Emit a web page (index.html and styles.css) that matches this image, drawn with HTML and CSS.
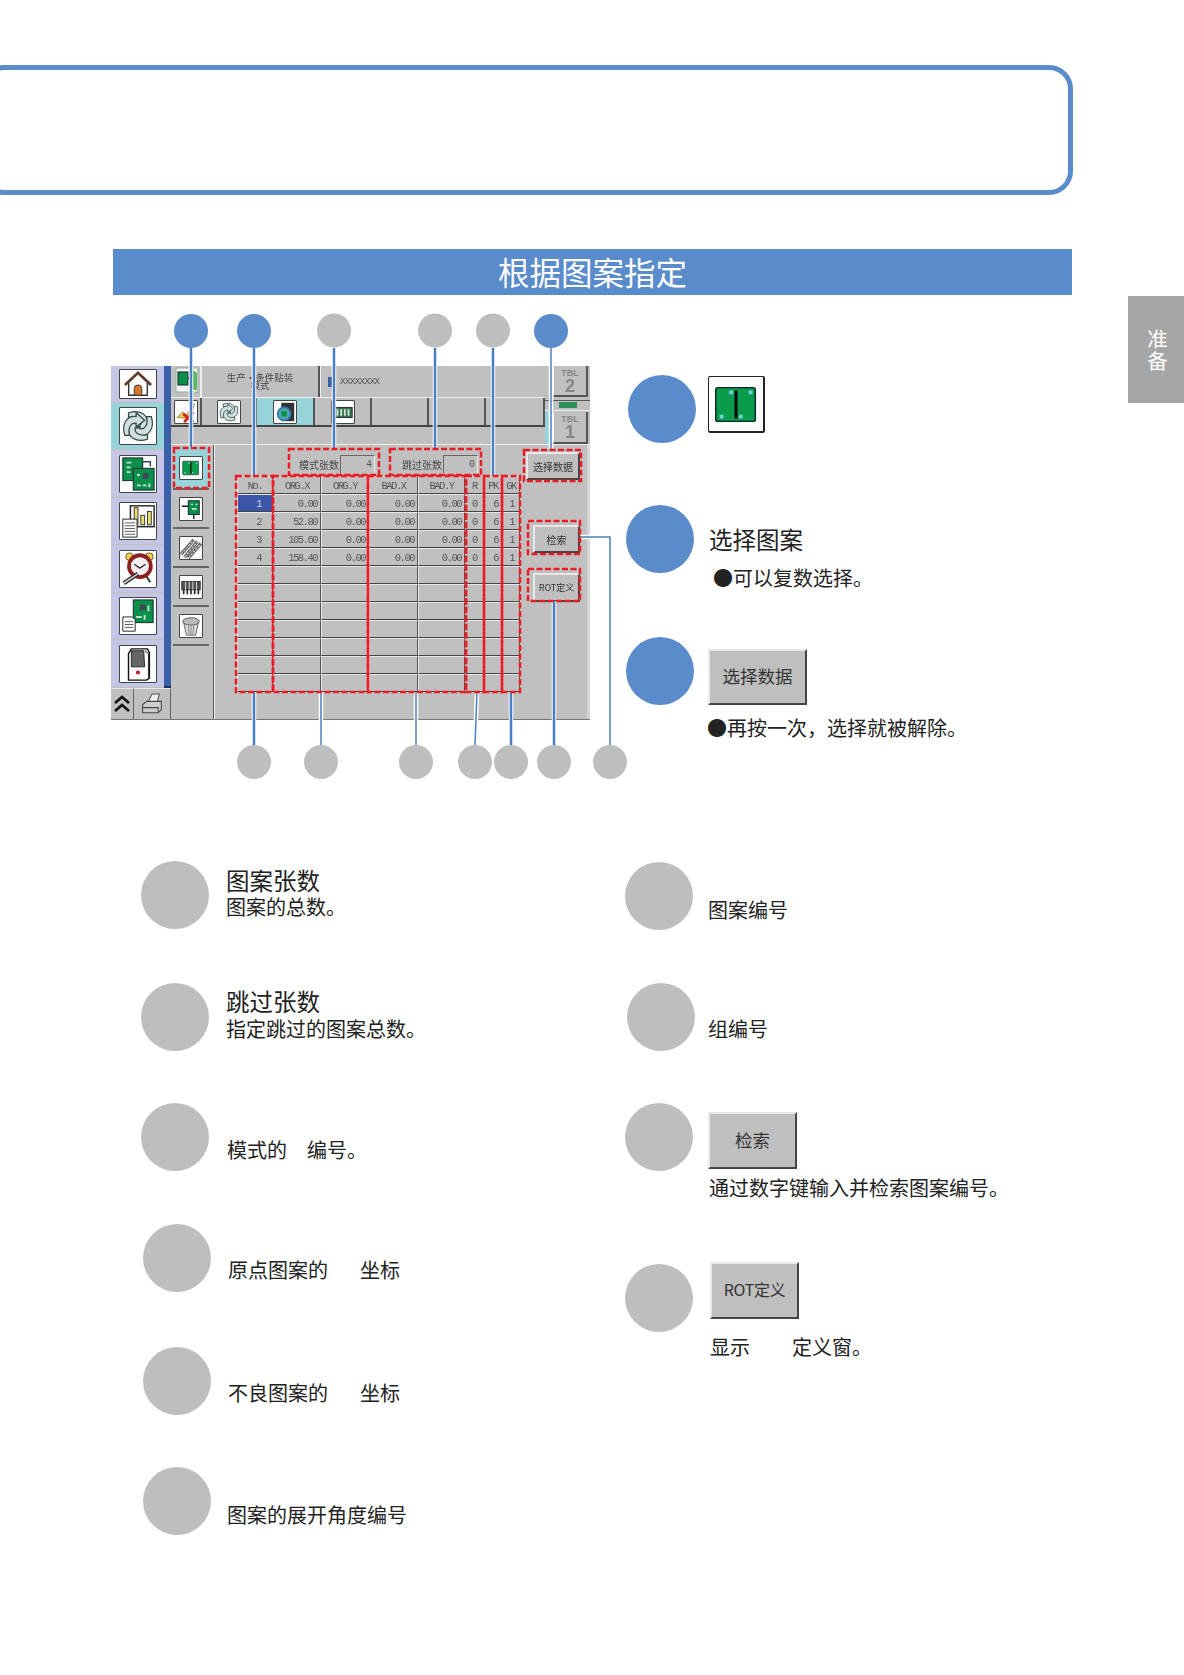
FILE: index.html
```html
<!DOCTYPE html>
<html lang="zh-CN">
<head>
    <meta charset="UTF-8">
    <meta name="viewport" content="width=device-width, initial-scale=1.0">
    <title>根据图案指定</title>
    <link rel="stylesheet" href="styles.css">
</head>
<body>
    <svg class="defs" width="0" height="0">
        <symbol id="i-home" viewBox="0 0 38 30">
            <path d="M9 14V27H29V14" fill="#fff" stroke="#333" stroke-width="1.5"/>
            <path d="M5 16L19 3L33 16" fill="none" stroke="#5c3b2c" stroke-width="3"/>
            <path d="M15 27V20a4 4 0 0 1 8 0v7z" fill="#d9772b" stroke="#333"/>
        </symbol>
        <symbol id="i-cycle" viewBox="0 0 38 38">
            <g id="swirl"><path d="M9 5C22 1 30 8 29 17L33 17L25 26L18 17L22 17C23 12 18 8 9 10Z" fill="#d3dfdf" stroke="#2d4a4a" stroke-width="1.3"/></g>
            <use href="#swirl" transform="rotate(90 19 19)"/>
            <use href="#swirl" transform="rotate(180 19 19)"/>
            <use href="#swirl" transform="rotate(270 19 19)"/>
        </symbol>
        <symbol id="i-pcbs" viewBox="0 0 38 38">
            <rect x="3" y="2" width="21" height="24" fill="#0d8f4c" stroke="#123"/>
            <path d="M24 6h8v5" fill="none" stroke="#345" stroke-width="1.5"/>
            <rect x="14" y="13" width="22" height="23" fill="#0d8f4c" stroke="#123"/>
            <rect x="24" y="18" width="6" height="6" fill="#445"/>
            <path d="M7 7h5M7 12h4M7 17h4M18 31h4M24 31h4M31 29v4M18 20h3" stroke="#bfe6cf" stroke-width="2"/>
        </symbol>
        <symbol id="i-chart" viewBox="0 0 38 38">
            <rect x="11" y="3" width="25" height="22" fill="#fff" stroke="#222" stroke-width="1.5"/>
            <rect x="15" y="5" width="4" height="18" fill="#e8e070" stroke="#333"/>
            <rect x="22" y="13" width="4" height="10" fill="#e8e070" stroke="#333"/>
            <rect x="29" y="9" width="4" height="14" fill="#e8e070" stroke="#333"/>
            <rect x="3" y="17" width="15" height="19" fill="#fff" stroke="#222"/>
            <path d="M5 21h11M5 24h11M5 27h11M5 30h11M5 33h11" stroke="#555"/>
        </symbol>
        <symbol id="i-alarm" viewBox="0 0 38 38">
            <circle cx="10" cy="6" r="4" fill="#ecd44a" stroke="#654"/>
            <circle cx="31" cy="6" r="4" fill="#ecd44a" stroke="#654"/>
            <circle cx="21" cy="16" r="11.5" fill="#f5eeee" stroke="#8c2020" stroke-width="4"/>
            <path d="M15 14l6 4l6-4" fill="none" stroke="#333" stroke-width="1.5"/>
            <path d="M28 27l4 6" stroke="#333" stroke-width="2"/>
            <path d="M4 34l15-10" stroke="#333" stroke-width="4.5"/>
            <path d="M4 34l15-10" stroke="#ddd" stroke-width="1.5"/>
        </symbol>
        <symbol id="i-boardoc" viewBox="0 0 38 38">
            <rect x="14" y="2" width="21" height="24" fill="#0d8f4c" stroke="#123"/>
            <rect x="21" y="7" width="6" height="6" fill="#445"/>
            <path d="M17 20h6M26 18v5M30 8v6" stroke="#bfe6cf" stroke-width="2"/>
            <path d="M3 20h10l3 3v12H3z" fill="#fff" stroke="#222"/>
            <path d="M5 25h9M5 28h9M5 31h9" stroke="#555"/>
        </symbol>
        <symbol id="i-machine" viewBox="0 0 38 38">
            <path d="M9 8L12 3H29L31 7V34L28 36H9Z" fill="#fff" stroke="#111" stroke-width="1.5"/>
            <path d="M12 5H25L26 22H12Z" fill="#666" stroke="#222"/>
            <path d="M26 5L30 8V33" fill="none" stroke="#222"/>
            <circle cx="19" cy="28" r="2.2" fill="#b22"/>
        </symbol>
        <symbol id="i-split" viewBox="0 0 57 57">
            <rect x="7" y="11" width="41" height="35" rx="2" fill="#0a9b4b" stroke="#123" stroke-width="1.5"/>
            <rect x="26.5" y="14" width="3" height="29"/>
            <path d="M21 14h4v4h-4zM41 14h4v4h-4zM11 39h4v4h-4zM31 39h4v4h-4z" fill="#6fd0dc"/>
        </symbol>
        <symbol id="i-conn" viewBox="0 0 24 24">
            <rect x="9" y="3" width="12" height="15" fill="#0d8f4c" stroke="#123"/>
            <path d="M2 9h7M15 18v5" stroke="#123" stroke-width="1.5"/>
            <path d="M12 7h2M17 7h2M13 12h5" stroke="#cfe" stroke-width="1.5"/>
        </symbol>
        <symbol id="i-strips" viewBox="0 0 24 24">
            <path d="M1 19L15 3M5 22L19 5M9 23L23 7" stroke="#555" stroke-width="3.5"/>
            <path d="M1 19L15 3M5 22L19 5M9 23L23 7" stroke="#ccc" stroke-width="1.5" stroke-dasharray="3 1"/>
        </symbol>
        <symbol id="i-chips" viewBox="0 0 24 24">
            <rect x="2" y="6" width="20" height="9" fill="#555" stroke="#222"/>
            <path d="M6 6v9M10 6v9M14 6v9M18 6v9" stroke="#ddd"/>
            <path d="M4 15v5M8 15v5M12 15v5M16 15v5M20 15v5" stroke="#222" stroke-width="1.8"/>
        </symbol>
        <symbol id="i-bucket" viewBox="0 0 24 24">
            <path d="M4 8L7 22H17L20 8Z" fill="#ddd" stroke="#555"/>
            <ellipse cx="12" cy="7" rx="9" ry="4" fill="#bbb" stroke="#555"/>
            <path d="M9 12l1 9M15 12l-1 9M12 12v9" stroke="#777"/>
        </symbol>
    </svg>

    <div class="frame"></div>
    <h1 class="title">根据图案指定</h1>

    <div class="upper">
        <div class="diagram">
            <div class="screen">
                <div class="rail">
                    <div class="rail-top">
                        <div class="side">
                            <div class="side-cell cell-home"><span class="ico ico-home"><svg><use href="#i-home"/></svg></span></div>
                            <div class="side-cell cell-on"><span class="ico"><svg><use href="#i-cycle"/></svg></span></div>
                            <div class="side-cell"><span class="ico"><svg><use href="#i-pcbs"/></svg></span></div>
                            <div class="side-cell"><span class="ico"><svg><use href="#i-chart"/></svg></span></div>
                            <div class="side-cell"><span class="ico"><svg><use href="#i-alarm"/></svg></span></div>
                            <div class="side-cell"><span class="ico"><svg><use href="#i-boardoc"/></svg></span></div>
                            <div class="side-cell"><span class="ico"><svg><use href="#i-machine"/></svg></span></div>
                        </div>
                        <div class="strip"></div>
                    </div>
                    <div class="rail-bottom">
                        <div class="rail-btn rail-up">
                            <svg width="18" height="20" viewBox="0 0 18 20"><path d="M2 9L9 3L16 9M2 17L9 11L16 17" fill="none" stroke="#111" stroke-width="2.6"/></svg>
                        </div>
                        <div class="rail-btn rail-print">
                            <svg width="24" height="25" viewBox="0 0 22 24"><path d="M7 10L11 2H18L16 10Z" fill="#eee" stroke="#555"/><path d="M2 12L6 9H20V17L17 20H2Z" fill="#ccc" stroke="#444"/><path d="M2 15H17V20" fill="none" stroke="#444"/></svg>
                        </div>
                    </div>
                </div>

                <div class="main">
                    <div class="head">
                        <div class="head-left">
                            <div class="head-row1">
                                <div class="head-door">
                                    <svg width="24" height="26" viewBox="0 0 24 26"><rect x="1" y="1" width="22" height="24" fill="#eef4ee" stroke="#9a9"/><rect x="3" y="5" width="10" height="13" fill="#0d8f4c" stroke="#123"/><path d="M13 11h4" stroke="#123" stroke-width="2"/><path d="M18 3l4 3v17h-6V12z" fill="#5cb85c"/></svg>
                                </div>
                                <div class="head-name">生产·条件贴装<br>模式</div>
                                <div class="head-field"><i class="field-mark"></i>XXXXXXXX</div>
                            </div>
                            <div class="head-row2">
                                <div class="tab tab-first">
                                    <span class="ico ico-sm"><svg viewBox="0 0 24 24"><path d="M2 18L9 12L12 16L21 3L17 19Z" fill="#e8d050" stroke="#a83"/><path d="M9 14L20 23M20 12L10 23" stroke="#d2231e" stroke-width="3"/></svg></span>
                                </div>
                                <div class="tab tab-b"><span class="ico ico-sm"><svg><use href="#i-cycle"/></svg></span></div>
                                <div class="tab tab-c tab-on">
                                    <span class="ico ico-sm"><svg viewBox="0 0 24 24"><rect x="8" y="2" width="14" height="20" fill="#333"/><circle cx="11" cy="14" r="7" fill="#5aa" stroke="#2a7db5" stroke-width="2"/><rect x="8" y="11" width="6" height="6" fill="#0d8f4c"/></svg></span>
                                </div>
                                <div class="tab tab-d"><span class="ico ico-sm"><svg viewBox="0 0 24 24"><rect x="2" y="7" width="20" height="11" fill="#2c7a4c" stroke="#222"/><path d="M6 9v7M10 9v7M14 9v7M18 9v7" stroke="#ddd" stroke-width="2"/></svg></span></div>
                                <div class="tab tab-d"></div>
                                <div class="tab tab-d"></div>
                                <div class="tab tab-end"></div>
                            </div>
                        </div>
                        <div class="head-right">
                            <div class="tbl"><b>TBL</b><strong>2</strong></div>
                            <div class="tbl-led"><i></i></div>
                            <div class="tbl-low">
                                <i class="sliver"></i>
                                <div class="tbl"><b>TBL</b><strong>1</strong></div>
                            </div>
                        </div>
                    </div>

                    <div class="body">
                        <div class="tools">
                            <div class="tool tool-on"><span class="ico ico-sm"><svg><use href="#i-split"/></svg></span></div>
                            <div class="tool"><span class="ico ico-sm"><svg><use href="#i-conn"/></svg></span></div>
                            <div class="tool"><span class="ico ico-sm"><svg><use href="#i-strips"/></svg></span></div>
                            <div class="tool"><span class="ico ico-sm"><svg><use href="#i-chips"/></svg></span></div>
                            <div class="tool"><span class="ico ico-sm"><svg><use href="#i-bucket"/></svg></span></div>
                        </div>
                        <div class="panel">
                            <div class="panel-left">
                                <div class="counts">
                                    <div class="count count-a"><span>模式张数</span><em>4</em></div>
                                    <div class="count count-b"><span>跳过张数</span><em>0</em></div>
                                </div>
                                <table class="grid">
                                    <thead>
                                        <tr><th class="w-no">No.</th><th class="w-x">ORG.X</th><th class="w-y">ORG.Y</th><th class="w-bx">BAD.X</th><th class="w-by">BAD.Y</th><th class="w-r">R</th><th class="w-p">PK</th><th class="w-p">GK</th></tr>
                                    </thead>
                                    <tbody>
                                        <tr><td class="sel">1</td><td>0.00</td><td>0.00</td><td>0.00</td><td>0.00</td><td class="mid">0</td><td>6</td><td class="gk">1</td></tr>
                                        <tr><td class="no">2</td><td>52.80</td><td>0.00</td><td>0.00</td><td>0.00</td><td class="mid">0</td><td>6</td><td class="gk">1</td></tr>
                                        <tr><td class="no">3</td><td>105.60</td><td>0.00</td><td>0.00</td><td>0.00</td><td class="mid">0</td><td>6</td><td class="gk">1</td></tr>
                                        <tr><td class="no">4</td><td>158.40</td><td>0.00</td><td>0.00</td><td>0.00</td><td class="mid">0</td><td>6</td><td class="gk">1</td></tr>
                                        <tr><td></td><td></td><td></td><td></td><td></td><td></td><td></td><td></td></tr>
                                        <tr><td></td><td></td><td></td><td></td><td></td><td></td><td></td><td></td></tr>
                                        <tr><td></td><td></td><td></td><td></td><td></td><td></td><td></td><td></td></tr>
                                        <tr><td></td><td></td><td></td><td></td><td></td><td></td><td></td><td></td></tr>
                                        <tr><td></td><td></td><td></td><td></td><td></td><td></td><td></td><td></td></tr>
                                        <tr><td></td><td></td><td></td><td></td><td></td><td></td><td></td><td></td></tr>
                                        <tr><td></td><td></td><td></td><td></td><td></td><td></td><td></td><td></td></tr>
                                    </tbody>
                                </table>
                            </div>
                            <div class="panel-right">
                                <div class="btn btn-mini btn-select">选择数据</div>
                                <div class="btn btn-mini btn-find">检索</div>
                                <div class="btn btn-mini btn-rot">ROT定义</div>
                            </div>
                        </div>
                    </div>
                </div>
            </div>

            <!-- callouts, in page coordinates -->
            <svg class="overlay" viewBox="111 296 515 490" width="515" height="490">
                <g class="halo">
                    <path d="M191 348V447M254 348V475M334 348V449M435 348V449M493 348V475M551 348V449"/>
                    <path d="M254 692V745M321 692V745M416 692V745M477 692L475 745M511 692V745M554 601V745M580 537H610V745"/>
                </g>
                <g class="lead">
                    <path d="M191 348V447M254 348V475M334 348V449M435 348V449M493 348V475"/>
                    <path d="M254 692V745M511 692V745M554 601V745"/>
                </g>
                <g class="lead lead-thin">
                    <path d="M551 348V449M321 692V745M416 692V745M477 692L475 745M580 537H610V745"/>
                </g>
                <g class="marks">
                    <rect x="174" y="448" width="35" height="40"/>
                    <rect x="289" y="449" width="90" height="26"/>
                    <rect x="390" y="449" width="91" height="26"/>
                    <rect x="524" y="450" width="57" height="31"/>
                    <rect x="236" y="476" width="37" height="216"/>
                    <rect x="273" y="476" width="95" height="216"/>
                    <rect x="368" y="476" width="98" height="216"/>
                    <rect x="466" y="476" width="18" height="216"/>
                    <rect x="484" y="476" width="18" height="216"/>
                    <rect x="502" y="476" width="18" height="216"/>
                    <rect x="528" y="521" width="52" height="33"/>
                    <rect x="528" y="569" width="52" height="32"/>
                </g>
                <g class="dot-blue">
                    <circle cx="191" cy="331" r="17"/>
                    <circle cx="254" cy="331" r="17"/>
                    <circle cx="551" cy="331" r="17"/>
                </g>
                <g class="dot-grey">
                    <circle cx="334" cy="330.5" r="17"/>
                    <circle cx="435" cy="330.5" r="17"/>
                    <circle cx="493" cy="330.5" r="17"/>
                    <circle cx="254" cy="762" r="17"/>
                    <circle cx="321" cy="762" r="17"/>
                    <circle cx="416" cy="762" r="17"/>
                    <circle cx="475" cy="762" r="17"/>
                    <circle cx="511" cy="762" r="17"/>
                    <circle cx="554" cy="762" r="17"/>
                    <circle cx="610" cy="762" r="17"/>
                </g>
            </svg>
        </div>

        <div class="notes">
            <div class="note note-a">
                <i class="disc disc-blue"></i>
                <div class="big-icon"><svg width="55" height="55"><use href="#i-split"/></svg></div>
            </div>
            <div class="note note-b">
                <i class="disc disc-blue"></i>
                <div class="note-text">
                    <p class="head-text">选择图案</p>
                    <p class="line line-in">●可以复数选择。</p>
                </div>
            </div>
            <div class="note note-c">
                <i class="disc disc-blue"></i>
                <div class="note-text note-text-c">
                    <div class="btn btn-big btn-wide">选择数据</div>
                    <p class="line line-after">●再按一次，选择就被解除。</p>
                </div>
            </div>
        </div>

        <div class="thumb">准<br>备</div>
    </div>

    <div class="lists">
        <div class="list list-left">
            <div class="item">
                <i class="disc"></i>
                <div class="item-text"><p class="head-text">图案张数</p><p class="line">图案的总数。</p></div>
            </div>
            <div class="item">
                <i class="disc"></i>
                <div class="item-text"><p class="head-text">跳过张数</p><p class="line">指定跳过的图案总数。</p></div>
            </div>
            <div class="item">
                <i class="disc"></i>
                <div class="item-text single"><p class="line">模式的　编号。</p></div>
            </div>
            <div class="item item-in">
                <i class="disc"></i>
                <div class="item-text single"><p class="line">原点图案的<span class="blank"></span>坐标</p></div>
            </div>
            <div class="item item-in">
                <i class="disc"></i>
                <div class="item-text single"><p class="line">不良图案的<span class="blank"></span>坐标</p></div>
            </div>
            <div class="item item-in item-last">
                <i class="disc"></i>
                <div class="item-text single low"><p class="line">图案的展开角度编号</p></div>
            </div>
        </div>

        <div class="list list-right">
            <div class="item">
                <i class="disc"></i>
                <div class="item-text single low"><p class="line">图案编号</p></div>
            </div>
            <div class="item item-nudge">
                <i class="disc"></i>
                <div class="item-text single"><p class="line">组编号</p></div>
            </div>
            <div class="item">
                <i class="disc"></i>
                <div class="item-text item-btn">
                    <div class="btn btn-big btn-std">检索</div>
                    <p class="line line-find">通过数字键输入并检索图案编号。</p>
                </div>
            </div>
            <div class="item item-rot">
                <i class="disc"></i>
                <div class="item-text">
                    <div class="btn btn-big btn-std btn-rotbig">ROT定义</div>
                    <p class="line line-rot">显示<span class="blank-wide"></span>定义窗。</p>
                </div>
            </div>
        </div>
    </div>
</body>
</html>
```

FILE: styles.css
```css
body {
    margin: 0;
    height: 1675px;
    overflow: hidden;
    background-color: #fff;
    color: #222;
    font-family: "Noto Sans CJK SC", sans-serif;
}

p {
    margin: 0;
}

.defs {
    position: absolute;
}

/* page head */
.frame {
    box-sizing: border-box;
    width: 1093px;
    height: 130px;
    margin: 65px 0 0 -20px;
    border: 5px solid #5a8bca;
    border-radius: 24px;
}

.title {
    box-sizing: border-box;
    width: 959px;
    height: 46px;
    margin: 54px 0 0 113px;
    background-color: #5a8bca;
    color: #fff;
    font-size: 31.5px;
    font-weight: 400;
    line-height: 44px;
    text-align: center;
}

.upper {
    display: grid;
    grid-template-columns: 515px 502px 56px;
    height: 565px;
    margin: 1px 0 0 111px;
}

.thumb {
    height: 107px;
    background-color: #a6a6a6;
    color: #fff;
    font-size: 20.5px;
    line-height: 22px;
    padding: 31px 0 0 3px;
    box-sizing: border-box;
    text-align: center;
}

/* callout diagram */
.diagram {
    position: relative;
    padding-top: 70px;
}

.overlay {
    position: absolute;
    top: 0;
    left: 0;
    overflow: visible;
}

.halo {
    fill: none;
    stroke: #fff;
    stroke-width: 4.5;
}

.lead {
    fill: none;
    stroke: #4a7fc1;
    stroke-width: 2.5;
}

.lead-thin {
    stroke-width: 1.5;
}

.marks {
    fill: none;
    stroke: #ed1c24;
    stroke-width: 2.5;
    stroke-dasharray: 6 2.5;
}

.dot-blue {
    fill: #5a8bca;
}

.dot-grey {
    fill: #bebebe;
}

/* machine screen */
.screen {
    box-sizing: border-box;
    display: flex;
    width: 479px;
    height: 354px;
    background-color: #c0c0c0;
    border-bottom: 1px solid #777;
    filter: blur(0.35px);
}

.rail {
    display: flex;
    flex-direction: column;
    width: 60px;
    flex-shrink: 0;
}

.rail-top {
    display: flex;
    height: 322px;
}

.side {
    width: 53px;
    display: flex;
    flex-direction: column;
}

.side-cell {
    display: flex;
    align-items: center;
    justify-content: center;
    height: 47px;
    margin-bottom: 1px;
    box-sizing: border-box;
    background-color: #c5c5e6;
}

.cell-home {
    height: 36px;
}

.cell-on {
    background-color: #96d4da;
}

.strip {
    width: 7px;
    background-color: #3a60aa;
    border-bottom: 2px solid #1d2f5e;
}

.rail-bottom {
    display: flex;
    height: 31px;
}

.rail-btn {
    display: flex;
    align-items: center;
    justify-content: center;
    background-color: #c0c0c0;
    border-top: 1px solid #e8e8e8;
    border-right: 1px solid #666;
}

.rail-up {
    width: 22px;
}

.rail-print {
    flex: 1;
}

.ico {
    box-sizing: border-box;
    display: block;
    width: 38px;
    height: 38px;
    background-color: #fdfdfd;
    border: 1px solid #444;
    border-radius: 1px;
}

.ico svg {
    display: block;
    width: 100%;
    height: 100%;
}

.ico-home {
    height: 30px;
}

.ico-sm {
    width: 24px;
    height: 24px;
}

.main {
    flex: 1;
    display: flex;
    flex-direction: column;
    min-width: 0;
}

.head {
    display: flex;
    height: 79px;
    border-bottom: 1px solid #eee;
    box-sizing: border-box;
}

.head-left {
    width: 374px;
    flex-shrink: 0;
}

.head-row1 {
    display: flex;
    height: 31px;
}

.head-door {
    width: 29px;
    padding: 1px 0 0 4px;
    box-sizing: border-box;
}

.head-name {
    width: 120px;
    border-left: 2px solid #eee;
    border-right: 2px solid #555;
    box-sizing: border-box;
    font-size: 9.5px;
    line-height: 8px;
    padding-top: 7px;
    color: #444;
    text-align: center;
}

.head-field {
    flex: 1;
    display: flex;
    align-items: center;
    padding-left: 7px;
    color: #555;
    font-family: "Liberation Mono", monospace;
    font-size: 9.5px;
    border-left: 1px solid #eee;
    letter-spacing: -0.8px;
}

.field-mark {
    flex-shrink: 0;
    width: 6px;
    height: 10px;
    margin-right: 6px;
    background-color: #3a60aa;
}

.head-row2 {
    display: flex;
    height: 30px;
    border-bottom: 2px solid #444;
    border-top: 1px solid #eee;
    box-sizing: border-box;
}

.tab {
    display: flex;
    align-items: center;
    justify-content: center;
    box-sizing: border-box;
    border-right: 2px solid #555;
}

.tab-first {
    width: 31px;
}

.tab-b {
    width: 55px;
}

.tab-c {
    width: 58px;
}

.tab-d {
    width: 57px;
}

.tab-end {
    flex: 1;
}

.tab-on {
    background-color: #96d4da;
}

.head-right {
    flex: 1;
    display: flex;
    flex-direction: column;
    align-items: flex-end;
}

.tbl {
    box-sizing: border-box;
    display: flex;
    flex-direction: column;
    align-items: center;
    width: 35px;
    height: 32px;
    margin-right: 2px;
    border-right: 2px solid #555;
    border-bottom: 2px solid #555;
    border-left: 1px solid #eee;
    color: #858585;
    font-family: "Liberation Sans", sans-serif;
}

.tbl b {
    font-size: 9px;
    line-height: 9px;
    margin-top: 3px;
}

.tbl strong {
    font-size: 18px;
    line-height: 16px;
}

.tbl-led {
    align-self: stretch;
    display: flex;
    justify-content: center;
    height: 9px;
    margin: 3px 0 1px;
    border-top: 1px solid #555;
    border-bottom: 1px solid #eee;
}

.tbl-led i {
    width: 18px;
    height: 6px;
    margin-top: 1px;
    background-color: #2d8f5a;
}

.tbl-low {
    align-self: stretch;
    display: flex;
    justify-content: space-between;
}

.sliver {
    width: 7px;
    background-color: #96d4da;
}

.body {
    flex: 1;
    display: flex;
    min-height: 0;
}

.tools {
    width: 43px;
    flex-shrink: 0;
    padding: 2px 0 0 2px;
    box-sizing: border-box;
    border-right: 1px solid #555;
}

.tool {
    display: flex;
    align-items: center;
    justify-content: center;
    width: 36px;
    height: 38px;
    margin-bottom: 1px;
    border-bottom: 2px solid #666;
    box-sizing: border-box;
}

.tool-on {
    height: 43px;
    background-color: #96d4da;
}

.panel {
    flex: 1;
    display: flex;
    padding-left: 22px;
    border-left: 1px solid #eee;
    border-right: 3px solid #d4d4d4;
}

.panel-left {
    width: 284px;
    flex-shrink: 0;
}

.counts {
    display: flex;
    height: 31px;
    padding: 10px 0 0 62px;
    box-sizing: border-box;
}

.count {
    display: flex;
    align-items: center;
    height: 18px;
    font-size: 10px;
    color: #444;
}

.count-a {
    width: 103px;
}

.count span {
    width: 41px;
}

.count em {
    width: 35px;
    height: 18px;
    box-sizing: border-box;
    border-top: 1px solid #666;
    border-left: 1px solid #666;
    border-right: 1px solid #eee;
    padding-right: 2px;
    font-family: "Liberation Mono", monospace;
    font-size: 10px;
    font-style: normal;
    line-height: 17px;
    text-align: right;
    color: #555;
}

.grid {
    border-collapse: separate;
    border-spacing: 0;
    table-layout: fixed;
    width: 283px;
    font-family: "Liberation Mono", monospace;
    font-size: 10.5px;
    letter-spacing: -1.5px;
    color: #555;
}

.grid th,
.grid td {
    box-sizing: border-box;
    height: 18px;
    padding: 2px 3px 0 0;
    border-top: 1px solid #e6e6e6;
    border-left: 1px solid #e6e6e6;
    border-right: 1px solid #555;
    border-bottom: 1px solid #444;
    line-height: 12px;
    text-align: right;
    font-weight: 400;
    overflow: hidden;
}

.grid th {
    text-align: center;
    padding: 1px 0 0;
    color: #555;
}

.w-no { width: 36px; }
.w-x { width: 48px; }
.w-y { width: 48px; }
.w-bx { width: 49px; }
.w-by { width: 47px; }
.w-r { width: 19px; }
.w-p { width: 18px; }

.grid .mid {
    text-align: center;
    padding-right: 0;
}

.grid .gk {
    padding-right: 5px;
}

.grid .no,
.grid .sel {
    text-align: right;
    padding-right: 11px;
}

.grid .sel {
    background-color: #3b55a8;
    color: #cdd6ee;
}

.panel-right {
    flex: 1;
    display: flex;
    flex-direction: column;
    align-items: flex-end;
    padding: 7px 7px 0 0;
}

.btn {
    box-sizing: border-box;
    display: flex;
    align-items: center;
    justify-content: center;
    background-color: #bfbfbf;
    border-top: 2px solid #e8e8e8;
    border-left: 2px solid #e8e8e8;
    border-right: 2px solid #444;
    border-bottom: 2px solid #444;
    color: #333;
}

.btn-mini {
    height: 28px;
    font-size: 10px;
    white-space: nowrap;
}

.btn-select {
    width: 54px;
}

.btn-find {
    width: 47px;
    margin-top: 45px;
}

.btn-rot {
    width: 47px;
    height: 29px;
    margin-top: 20px;
    font-size: 9px;
}

.btn-big {
    font-size: 17.5px;
    padding-bottom: 3px;
}

.btn-wide {
    width: 99px;
    height: 56px;
}

.btn-std {
    width: 89px;
    height: 57px;
}

.btn-rotbig {
    font-size: 16px;
    letter-spacing: -0.3px;
}

/* notes on the right */
.notes {
    display: flex;
    flex-direction: column;
}

.note {
    display: flex;
    height: 68px;
}

.disc {
    display: block;
    flex-shrink: 0;
    width: 68px;
    height: 68px;
    border-radius: 50%;
    background-color: #bebebe;
}

.disc-blue {
    background-color: #5a8bca;
}

.note-a {
    margin: 79px 0 0 2px;
    gap: 12px;
}

.big-icon {
    box-sizing: border-box;
    width: 57px;
    height: 57px;
    margin-top: 1px;
    background-color: #fafcfa;
    border: 1px solid #222;
    border-right-width: 2px;
    border-bottom-width: 2px;
    border-radius: 2px;
}

.note-b {
    margin-top: 62px;
    gap: 15px;
}

.note-c {
    margin-top: 64px;
    gap: 14px;
}

.head-text {
    font-size: 23.5px;
    line-height: 28px;
}

.line {
    font-size: 20px;
    line-height: 26px;
    white-space: nowrap;
}

.note-text {
    padding-top: 20px;
}

.line-in {
    margin: 12px 0 0 4px;
}

.note-text-c {
    padding-top: 12px;
}

.line-after {
    margin: 10px 0 0 -1px;
}

/* numbered lists */
.lists {
    display: grid;
    grid-template-columns: 484px 1fr;
    margin-left: 141px;
}

.list-right .item:first-child {
    margin-top: 1px;
}

.item {
    display: flex;
    gap: 17px;
}

.list-left .item:nth-child(1) { height: 122px; }
.list-left .item:nth-child(2) { height: 120px; }
.list-left .item:nth-child(3) { height: 121px; gap: 18px; }
.list-left .item:nth-child(4) { height: 123px; }
.list-left .item:nth-child(5) { height: 120px; }

.list-left .item:nth-child(2) .item-text {
    padding-top: 4px;
}

.list-left .item:nth-child(2) .line {
    margin-top: 1px;
}

.list-left .item:nth-child(3) .item-text {
    padding-top: 34px;
}

.list-left .item-in .item-text {
    padding-top: 33px;
}

.list-left .item-last .item-text {
    padding-top: 35px;
}

.item-in {
    gap: 17px;
    margin-left: 2px;
}

.item-last {
    gap: 16px;
}

.list-right .item {
    gap: 15px;
}

.list-right .item:nth-child(1) { height: 121px; }
.list-right .item:nth-child(2) { height: 120px; }
.list-right .item:nth-child(3) { height: 159px; gap: 15px; }

.list-right .item-nudge {
    gap: 13px;
    margin-left: 2px;
}

.item-text {
    padding-top: 5px;
}

.single {
    padding-top: 33px;
}

.low {
    padding-top: 35px;
}

.blank {
    display: inline-block;
    width: 32px;
}

.blank-wide {
    display: inline-block;
    width: 42px;
}

.list-right .item-btn {
    padding-top: 9px;
}

.line-find {
    margin: 6px 0 0 1px;
}

.item-rot .disc {
    margin-top: 2px;
}

.list-right .item-rot {
    gap: 17px;
}

.list-right .item-rot .item-text {
    padding-top: 0;
}

.line-rot {
    margin-top: 15px;
}
```
